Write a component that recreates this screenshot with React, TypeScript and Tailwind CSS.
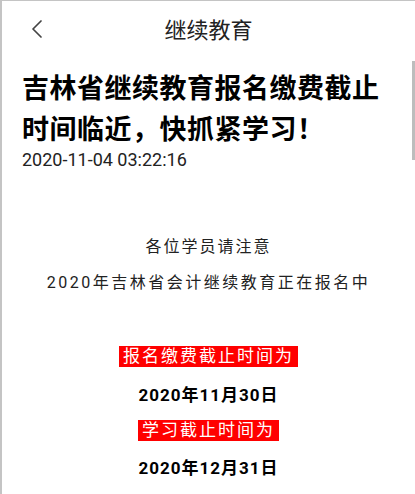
import { ChevronLeft } from 'lucide-react';

const font = { fontFamily: 'Roboto, "Noto Sans CJK SC", sans-serif' };

export default function App() {
  return (
    <div
      className="relative h-[494px] w-[415px] overflow-hidden border-t border-l-2 border-[#c4c4c4] bg-white text-[#111]"
      style={font}
    >
      {/* Header */}
      <div className="relative flex h-[60px] items-center justify-center">
        <ChevronLeft className="absolute left-[19px] top-[12px] h-[32px] w-[32px] text-[#444]" strokeWidth={1.3} />
        <h1 className="text-[22px] leading-none text-[#222]">继续教育</h1>
      </div>

      {/* Scrollbar */}
      <div className="absolute right-0 top-[60px] h-[99px] w-[3px] bg-[#bdbdbd]" />

      {/* Article */}
      <div className="mt-[8px] px-[20px]">
        <h2 className="text-[27px] font-bold leading-[41px] tracking-[0.5px] text-black">
          吉林省继续教育报名缴费截止时间临近，快抓紧学习！
        </h2>
        <p className="-mt-[1px] text-[18px] leading-[20px] text-[#222]">2020-11-04 03:22:16</p>
      </div>

      <div className="mt-[66px] flex flex-col items-center text-[16px] text-[#222]">
        <p className="leading-[22px] tracking-[2px]">各位学员请注意</p>
        <p className="mt-[14px] leading-[22px] tracking-[2.5px]">2020年吉林省会计继续教育正在报名中</p>

        <p className="mt-[52px] bg-[#f00] px-[4px] text-[17px] leading-[21px] tracking-[2px] text-white">
          报名缴费截止时间为
        </p>
        <p className="mt-[17px] text-[17px] font-bold leading-[22px] tracking-[1px] text-black">2020年11月30日</p>
        <p className="mt-[14px] bg-[#f00] px-[4px] text-[17px] leading-[21px] tracking-[2px] text-white">
          学习截止时间为
        </p>
        <p className="mt-[16px] text-[17px] font-bold leading-[22px] tracking-[1px] text-black">2020年12月31日</p>
      </div>
    </div>
  );
}
